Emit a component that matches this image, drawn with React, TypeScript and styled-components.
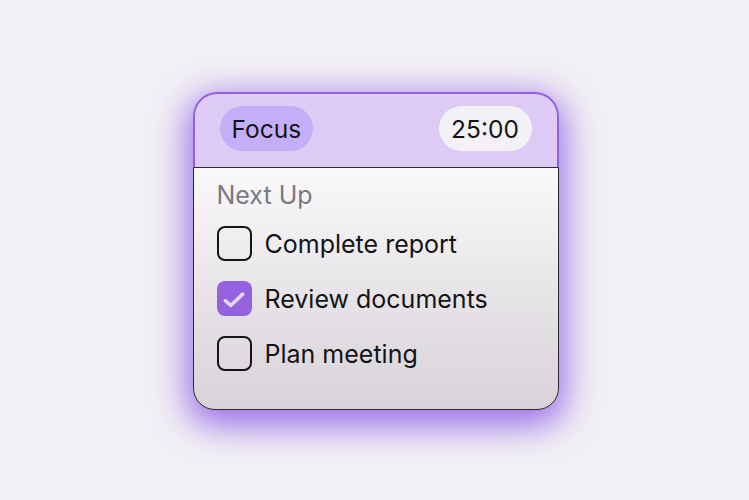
import React from "react";
import styled, { createGlobalStyle } from "styled-components";

const Global = createGlobalStyle`
  html, body { margin: 0; padding: 0; }
  body {
    background: #f2f0f4;
    font-family: Inter, "Noto Sans", sans-serif;
    color: #141414;
  }
`;

const Page = styled.div`
  width: 749px;
  height: 500px;
  display: flex;
  align-items: center;
  justify-content: center;
`;

const Card = styled.div`
  width: 366px;
  border-radius: 24px;
  box-shadow: 0 10px 34px 6px rgba(140, 90, 230, 0.85);
  display: flex;
  flex-direction: column;
  transform: translate(1px, 1px);
`;

const Header = styled.div`
  height: 75px;
  box-sizing: border-box;
  background: #ddcbf6;
  border: 2px solid #9162dc;
  border-bottom: none;
  border-radius: 24px 24px 0 0;
  padding: 12px 25px 0 25px;
  display: flex;
  justify-content: space-between;
  align-items: flex-start;
`;

const Pill = styled.div<{ $bg: string }>`
  height: 45px;
  padding: 0 12px;
  min-width: 93px;
  box-sizing: border-box;
  border-radius: 23px;
  background: ${(p) => p.$bg};
  display: flex;
  align-items: center;
  justify-content: center;
  font-size: 24.5px;
  color: #141414;
`;

const Body = styled.div`
  height: 243px;
  box-sizing: border-box;
  border: 1px solid #2b2b2b;
  border-radius: 0 0 22px 22px;
  background: linear-gradient(180deg, #faf9fa 0%, #e8e5e9 50%, #d7d3d8 100%);
  padding: 12px 24px 0 23px;
  display: flex;
  flex-direction: column;
`;

const Title = styled.div`
  font-size: 25px;
  line-height: 30px;
  color: #7b7a80;
  margin-bottom: 16px;
`;

const List = styled.div`
  display: flex;
  flex-direction: column;
  gap: 20px;
`;

const Row = styled.div`
  display: flex;
  align-items: center;
  gap: 13px;
  height: 35px;
  font-size: 25px;
  color: #141414;
`;

const Box = styled.div<{ $checked?: boolean }>`
  width: 35px;
  height: 35px;
  box-sizing: border-box;
  border-radius: 8px;
  border: ${(p) => (p.$checked ? "none" : "2px solid #151515")};
  background: ${(p) => (p.$checked ? "#9562df" : "transparent")};
  display: flex;
  align-items: center;
  justify-content: center;
`;

const Check = () => (
  <svg width="26" height="26" viewBox="0 0 24 24">
    <polyline
      points="4,13.5 9,18 20,7.5"
      fill="none"
      stroke="#e3d5fc"
      strokeWidth="3.2"
      strokeLinecap="round"
      strokeLinejoin="round"
      style={{ filter: "blur(0.4px)" }}
    />
  </svg>
);

const tasks = [
  { label: "Complete report", done: false },
  { label: "Review documents", done: true },
  { label: "Plan meeting", done: false },
];

export default function App() {
  return (
    <>
      <Global />
      <Page>
        <Card>
          <Header>
            <Pill $bg="#c4aef7">Focus</Pill>
            <Pill $bg="#f3f1f5">25:00</Pill>
          </Header>
          <Body>
            <Title>Next Up</Title>
            <List>
              {tasks.map((t) => (
                <Row key={t.label}>
                  <Box $checked={t.done}>{t.done && <Check />}</Box>
                  {t.label}
                </Row>
              ))}
            </List>
          </Body>
        </Card>
      </Page>
    </>
  );
}
